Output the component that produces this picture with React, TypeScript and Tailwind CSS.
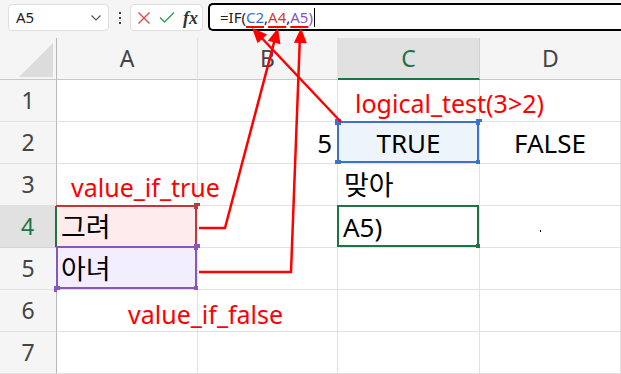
import React from "react";

const font = { fontFamily: '"Noto Sans", "Noto Sans CJK KR", sans-serif' };

// arrowhead polygon from a line's last segment
function head(x1: number, y1: number, x2: number, y2: number, len = 15, half = 6.5) {
  const dx = x2 - x1;
  const dy = y2 - y1;
  const d = Math.hypot(dx, dy);
  const ux = dx / d;
  const uy = dy / d;
  const bx = x2 - ux * len;
  const by = y2 - uy * len;
  const px = -uy * half;
  const py = ux * half;
  return `${x2},${y2} ${bx + px},${by + py} ${bx - px},${by - py}`;
}

function Handle({ pos, color }: { pos: string; color: string }) {
  return <div className={`absolute w-[6px] h-[6px] ${pos} ${color}`} />;
}

function Cell({
  children,
  className = "",
}: {
  children?: React.ReactNode;
  className?: string;
}) {
  return (
    <div className={`relative border-r border-b border-[#e1e1e1] bg-white flex items-center text-[26px] text-black leading-none ${className}`}>
      {children}
    </div>
  );
}

function RowHead({ n, active = false }: { n: number; active?: boolean }) {
  return (
    <div
      className={`flex items-center justify-center border-b border-r text-[23px] leading-none ${
        active
          ? "bg-[#e1e1e1] border-b-[#d4d4d4] border-r-2 border-r-[#217346] text-[#217346]"
          : "bg-[#f5f5f5] border-b-[#e1e1e1] border-r-[#b8b8b8] text-[#444]"
      }`}
    >
      {n}
    </div>
  );
}

export default function App() {
  return (
    <div className="relative w-[621px] h-[374px] overflow-hidden bg-[#f5f5f5]" style={font}>
      {/* Formula bar */}
      <div className="h-[38px] flex items-start pt-[4px]">
        <div className="ml-[8px] w-[101px] h-[27px] rounded-[4px] border border-[#dedede] bg-white flex items-center justify-between pl-[7px] pr-[6px]">
          <span className="text-[15px] text-[#222]">A5</span>
          <svg width="12" height="8" viewBox="0 0 12 8">
            <path d="M1.5 1.5 L6 6 L10.5 1.5" fill="none" stroke="#555" strokeWidth="1.2" />
          </svg>
        </div>
        <div className="w-[21px] h-[27px] flex flex-col items-center justify-center gap-[3px]">
          <div className="w-[2px] h-[2px] bg-[#444]" />
          <div className="w-[2px] h-[2px] bg-[#444]" />
          <div className="w-[2px] h-[2px] bg-[#444]" />
        </div>
        <div className="w-[73px] h-[27px] rounded-[4px] border border-[#dedede] bg-white flex items-center pl-[6px] gap-[8px]">
          <svg width="14" height="14" viewBox="0 0 14 14">
            <path d="M1.5 1.5 L12.5 12.5 M12.5 1.5 L1.5 12.5" stroke="#e0474c" strokeWidth="1.4" />
          </svg>
          <svg width="16" height="13" viewBox="0 0 16 13">
            <path d="M1 6.5 L5.5 11 L15 1.5" fill="none" stroke="#3a9a50" strokeWidth="1.4" />
          </svg>
          <span className="text-[18px] italic font-bold text-[#333] leading-none" style={{ fontFamily: '"Liberation Serif", serif' }}>
            fx
          </span>
        </div>
        <div className="ml-[5px] flex-1 h-[28px] -mt-[1px] border-2 border-r-0 border-black rounded-l-[5px] bg-white flex items-center pl-[10px]">
          <span className="text-[15px] text-[#222] leading-none">
            =IF(
            <span className="text-[#2f6fd0] underline decoration-[#ff0000] decoration-2 underline-offset-[3px]">C2</span>,
            <span className="text-[#d23a3a] underline decoration-[#ff0000] decoration-2 underline-offset-[3px]">A4</span>,
            <span className="text-[#8854c0] underline decoration-[#ff0000] decoration-2 underline-offset-[3px]">A5</span>
            <span className="text-[#8854c0]">)</span>
          </span>
          <div className="ml-[1px] w-[1px] h-[19px] bg-black" />
        </div>
      </div>

      {/* Sheet grid */}
      <div className="grid grid-cols-[57px_141px_140px_142px_141px] grid-rows-[42px_repeat(7,42px)]">
        {/* header row */}
        <div className="relative bg-[#f5f5f5] border-r border-b border-r-[#b8b8b8] border-b-[#c8c8c8]">
          <svg className="absolute left-[19px] top-[5px]" width="35" height="35" viewBox="0 0 35 35">
            <polygon points="34,0 34,34 0,34" fill="#dcdcdc" />
          </svg>
        </div>
        <div className="flex items-center justify-center bg-[#f5f5f5] border-b border-b-[#c8c8c8] border-r border-r-[#e1e1e1] text-[23px] text-[#444]">A</div>
        <div className="flex items-center justify-center bg-[#f5f5f5] border-b border-b-[#c8c8c8] border-r border-r-[#e1e1e1] text-[23px] text-[#444]">B</div>
        <div className="flex items-center justify-center bg-[#e1e1e1] border-b-2 border-b-[#217346] border-r border-r-[#d0d0d0] text-[23px] text-[#217346]">C</div>
        <div className="flex items-center justify-center bg-[#f5f5f5] border-b border-b-[#c8c8c8] text-[23px] text-[#444]">D</div>

        {/* row 1 */}
        <RowHead n={1} />
        <Cell />
        <Cell />
        <Cell />
        <Cell />

        {/* row 2 */}
        <RowHead n={2} />
        <Cell />
        <Cell className="justify-end pr-[5px]">5</Cell>
        <Cell className="justify-center !bg-[#edf4fc]">
          TRUE
          <div className="absolute -left-[1px] -top-[1px] right-0 bottom-0 border-2 border-[#3b74c6]" />
          <Handle pos="-left-[3px] -top-[3px]" color="bg-[#3b74c6]" />
          <Handle pos="-right-[3px] -top-[3px]" color="bg-[#3b74c6]" />
          <Handle pos="-left-[3px] -bottom-[3px]" color="bg-[#3b74c6]" />
          <Handle pos="-right-[3px] -bottom-[3px]" color="bg-[#3b74c6]" />
        </Cell>
        <Cell className="justify-center">FALSE</Cell>

        {/* row 3 */}
        <RowHead n={3} />
        <Cell />
        <Cell />
        <Cell className="pl-[6px] text-[27px]">맞아</Cell>
        <Cell />

        {/* row 4 */}
        <RowHead n={4} active />
        <Cell className="pl-[4px] text-[27px] !bg-[#fdeceb]">
          그려
          <div className="absolute -left-[1px] -top-[1px] right-0 bottom-0 border-2 border-l-0 border-b-0 border-[#c6353c]" />
          <Handle pos="-right-[3px] -top-[3px]" color="bg-[#c6353c]" />
        </Cell>
        <Cell />
        <Cell className="pl-[5px]">
          A5)
          <div className="absolute -left-[1px] -top-[1px] right-0 bottom-0 border-2 border-[#217346]" />
          <Handle pos="-right-[3px] -bottom-[3px]" color="bg-[#217346]" />
        </Cell>
        <Cell>
          <div className="absolute left-[60px] top-[24px] w-[1px] h-[2px] bg-black" />
        </Cell>

        {/* row 5 */}
        <RowHead n={5} />
        <Cell className="pl-[4px] text-[27px] !bg-[#f3eefd]">
          아녀
          <div className="absolute -left-[1px] -top-[2px] right-0 bottom-0 border-2 border-[#8857bd]" />
          <Handle pos="-right-[3px] -top-[4px]" color="bg-[#8857bd]" />
          <Handle pos="-left-[3px] -bottom-[3px]" color="bg-[#8857bd]" />
          <Handle pos="-right-[3px] -bottom-[3px]" color="bg-[#8857bd]" />
        </Cell>
        <Cell />
        <Cell />
        <Cell />

        {/* rows 6-7 */}
        {[6, 7].map((n) => (
          <React.Fragment key={n}>
            <RowHead n={n} />
            <Cell />
            <Cell />
            <Cell />
            <Cell />
          </React.Fragment>
        ))}
      </div>

      {/* red annotations drawn over the sheet */}
      <div className="absolute left-[355px] top-[91px] text-[25px] leading-none text-[#ff0000] whitespace-nowrap">logical_test(3&gt;2)</div>
      <div className="absolute left-[71px] top-[175px] text-[25px] leading-none text-[#ff0000] whitespace-nowrap">value_if_true</div>
      <div className="absolute left-[128px] top-[302px] text-[25px] leading-none text-[#ff0000] whitespace-nowrap">value_if_false</div>
      <svg className="absolute left-0 top-0 pointer-events-none" width="621" height="374" viewBox="0 0 621 374">
        <g stroke="#ff0000" strokeWidth="2.5" fill="none">
          <polyline points="341,122 258,34" />
          <polyline points="199,228 225,228 276,35" />
          <polyline points="199,272 291,272 300,35" />
        </g>
        <g fill="#ff0000">
          <polygon points={head(341, 122, 252, 28)} />
          <polygon points={head(225, 228, 278, 28)} />
          <polygon points={head(291, 272, 301, 28)} />
        </g>
      </svg>
    </div>
  );
}
